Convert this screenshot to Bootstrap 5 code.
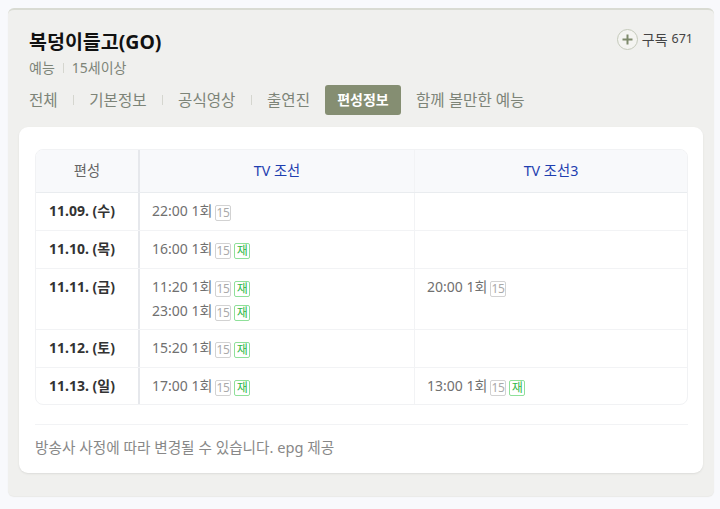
<!doctype html>
<html lang="ko"><head><meta charset="utf-8">
<link href="https://cdn.jsdelivr.net/npm/bootstrap@5.3.0/dist/css/bootstrap.min.css" rel="stylesheet">
<style>
html,body{height:100%}
body{background:#f8f9fc;font-family:"Noto Sans","Noto Sans CJK KR",sans-serif;color:#333;padding:8px 6px 0 8px;overflow:hidden}
.panel-outer{height:488px;background:#f0f0ee;border-top:2px solid #d9dbd3;border-radius:6px;padding:0 11px;box-shadow:0 1px 1px #e9e9e7}
.head-area{height:117px;padding:18px 10px 0}
.ttl{font-size:19.5px;font-weight:700;color:#111;line-height:28px;margin:0}
.meta-line{font-size:14px;color:#7d8478;line-height:20px;margin-top:2px;gap:8px}
.meta-sep{width:1px;height:10px;background:#d5d6cf}
.sub-box{font-size:14px;color:#444;gap:4px;margin-top:1px}
.sub-num{font-size:12.5px}
.plus-ring{width:21px;height:21px;border-radius:50%;border:1px solid #c5cabb;background:#f4f4f1}
.tabs-row{margin-top:7px;font-size:15.6px;color:#7d8478;height:30px}
.tab-link{color:#7d8478;text-decoration:none;line-height:30px;white-space:nowrap}
.tab-sep{width:1px;height:10px;background:#d5d6cf;margin:0 15.3px 0 15.2px}
.tab-on{background:#858e72;color:#fff;font-weight:700;font-size:14px;border-radius:3px;height:30px;width:76px;text-align:center;margin-left:15px;margin-right:15px}
.white-card{height:346px;background:#fff;border-radius:9px;padding:22px 15px 0 16px;box-shadow:0 1px 2px #dcdcda}
.sched{border:1px solid #f1f2f4;border-radius:8px;overflow:hidden;height:256px}
.sched .row-x{display:grid;grid-template-columns:104px 275px 1fr;border-bottom:1px solid #f2f3f5}
.sched .row-x:last-child{border-bottom:0}
.cell{padding:6px 12px 0 12px;font-size:14px;color:#707070;line-height:24px}
.cell-d{font-weight:700;color:#333;font-size:14px;padding:6px 0 0 13px;border-right:2px solid #e6e8ec}
.cell-m{border-right:1px solid #f2f3f5}
.hrow{height:43px;background:#f8f9fb;border-bottom-color:#e9ecef!important}
.hrow>div{display:flex;align-items:center;justify-content:center;font-size:14.3px;padding:0;height:42px;text-align:center}
.hrow .cell-d{font-weight:400;color:#666}
.ch{color:#1f3fb0}
.tag{display:inline-block;width:16px;height:16px;border:1px solid #d2d2d2;border-radius:2px;color:#aaa;font-size:12px;line-height:14px;text-align:center;vertical-align:-1px;margin-left:3px;letter-spacing:-.4px}
.tag-first{margin-left:-1px}
.tag-re{border-color:#8fe09a;color:#2fb84a}
.h38{height:38px}.h61{height:61px}
.note{border-top:1px solid #f2f3f5;margin-top:19px;padding-top:11px;font-size:14.65px;color:#888;line-height:22px}
</style></head><body>
<div class="panel-outer">
 <div class="head-area">
  <div class="d-flex justify-content-between align-items-start">
   <div><h1 class="ttl">복덩이들고(GO)</h1>
    <div class="meta-line d-flex align-items-center"><span>예능</span><span class="meta-sep"></span><span>15세이상</span></div></div>
   <div class="sub-box d-flex align-items-center"><span class="plus-ring d-flex align-items-center justify-content-center"><svg width="11" height="11" viewBox="0 0 11 11"><path d="M5.5 .5v10M.5 5.5h10" stroke="#7e8a6c" stroke-width="2"/></svg></span><span>구독</span><span class="sub-num">671</span></div>
  </div>
  <div class="tabs-row d-flex align-items-center">
   <a class="tab-link">전체</a><span class="tab-sep"></span><a class="tab-link">기본정보</a><span class="tab-sep"></span><a class="tab-link">공식영상</a><span class="tab-sep"></span><a class="tab-link">출연진</a><a class="tab-link tab-on">편성정보</a><a class="tab-link">함께 볼만한 예능</a>
  </div>
 </div>
 <div class="white-card">
  <div class="sched">
   <div class="row-x hrow"><div class="cell cell-d">편성</div><div class="cell cell-m ch">TV 조선</div><div class="cell ch">TV 조선3</div></div>
   <div class="row-x h38"><div class="cell cell-d">11.09. (수)</div><div class="cell cell-m">22:00 1회 <span class="tag tag-first">15</span></div><div class="cell"></div></div>
   <div class="row-x h38"><div class="cell cell-d">11.10. (목)</div><div class="cell cell-m">16:00 1회 <span class="tag tag-first">15</span><span class="tag tag-re">재</span></div><div class="cell"></div></div>
   <div class="row-x h61"><div class="cell cell-d">11.11. (금)</div><div class="cell cell-m">11:20 1회 <span class="tag tag-first">15</span><span class="tag tag-re">재</span><br>23:00 1회 <span class="tag tag-first">15</span><span class="tag tag-re">재</span></div><div class="cell">20:00 1회 <span class="tag tag-first">15</span></div></div>
   <div class="row-x h38"><div class="cell cell-d">11.12. (토)</div><div class="cell cell-m">15:20 1회 <span class="tag tag-first">15</span><span class="tag tag-re">재</span></div><div class="cell"></div></div>
   <div class="row-x h38"><div class="cell cell-d">11.13. (일)</div><div class="cell cell-m">17:00 1회 <span class="tag tag-first">15</span><span class="tag tag-re">재</span></div><div class="cell">13:00 1회 <span class="tag tag-first">15</span><span class="tag tag-re">재</span></div></div>
  </div>
  <div class="note">방송사 사정에 따라 변경될 수 있습니다. epg 제공</div>
 </div>
</div>
<script src="https://cdn.jsdelivr.net/npm/bootstrap@5.3.0/dist/js/bootstrap.bundle.min.js"></script>
</body></html>
